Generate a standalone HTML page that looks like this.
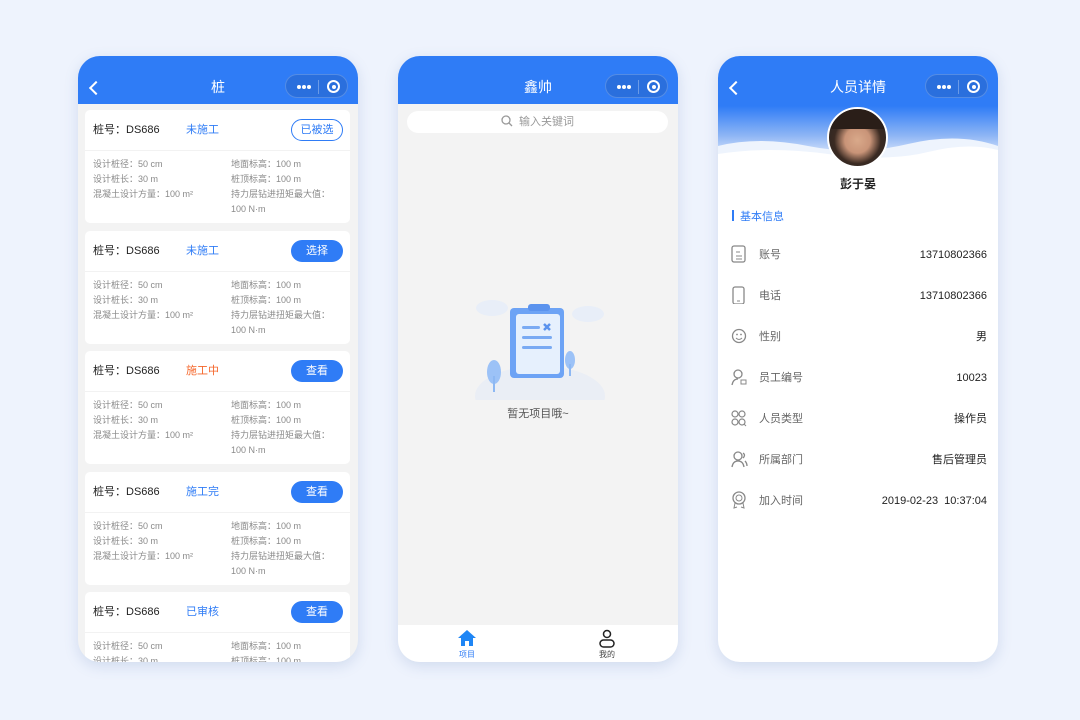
<!DOCTYPE html><html><head><meta charset="utf-8"><style>
*{margin:0;padding:0;box-sizing:border-box}
body{width:1080px;height:720px;background:#eef3fd;font-family:"Liberation Sans","Noto Sans CJK SC",sans-serif;position:relative;overflow:hidden}
.ph{position:absolute;top:56px;width:280px;height:606px;border-radius:22px;overflow:hidden;background:#f3f3f3;box-shadow:0 4px 14px rgba(80,110,170,.18)}
.hd{position:absolute;left:0;top:0;width:280px;height:48px;background:#2f7cf6;color:#fff;font-size:14px;text-align:center;line-height:62px}
.cap{position:absolute;right:10px;top:18px;width:63px;height:24px;border-radius:12px;background:rgba(0,0,0,.1);border:1px solid rgba(255,255,255,.2)}
.cap .d{position:absolute;left:11px;top:10px;width:14px;height:4px}
.cap .d i{position:absolute;top:0;width:4px;height:4px;border-radius:2px;background:#fff}
.cap .sep{position:absolute;left:32px;top:5px;width:1px;height:14px;background:rgba(255,255,255,.3)}
.cap .o{position:absolute;left:41px;top:5px;width:13px;height:13px;border:2px solid #fff;border-radius:50%}
.cap .o:after{content:"";position:absolute;left:2.5px;top:2.5px;width:4px;height:4px;border-radius:50%;background:#fff}
.back{position:absolute;left:13px;top:27px;width:10px;height:10px;border-left:2px solid #fff;border-bottom:2px solid #fff;transform:rotate(45deg)}
.card{position:absolute;left:7px;width:265px;height:113px;background:#fff;border-radius:5px}
.card .t{position:absolute;left:8px;top:13px;font-size:11px;line-height:14px;color:#222}
.card .s{position:absolute;left:101px;top:13px;font-size:11px;line-height:14px;color:#2f7cf6}
.card .b{position:absolute;left:206px;top:9px;width:52px;height:22px;border-radius:11px;background:#2f7cf6;color:#fff;font-size:11px;text-align:center;line-height:22px}
.card .b.ol{background:#fff;border:1px solid #2f7cf6;color:#2f7cf6;line-height:20px}
.card .ln{position:absolute;left:0;top:40px;width:100%;height:1px;background:#f2f2f2}
.card .g{position:absolute;font-size:9px;color:#8a8a8a;line-height:15px}
.row{position:absolute;left:0;width:280px;height:20px;font-size:11px}
.row .l{position:absolute;left:41px;top:3px;line-height:14px;color:#666}
.row .v{position:absolute;right:11px;top:3px;line-height:14px;color:#222}
.row svg{position:absolute;left:13px;top:0}
</style></head><body>

<div class="ph" style="left:78px">
<div class="hd">桩<div class="back"></div><div class="cap"><div class="d"><i style="left:0"></i><i style="left:5px"></i><i style="left:10px"></i></div><div class="sep"></div><div class="o"></div></div></div>
<div class="card" style="top:54px"><div class="t">桩号：DS686</div><div class="s">未施工</div><div class="b ol">已被选</div><div class="ln"></div>
<div class="g" style="left:8px;top:47px">设计桩径：50 cm<br>设计桩长：30 m<br>混凝土设计方量：100 m²</div><div class="g" style="left:146px;top:47px">地面标高：100 m<br>桩顶标高：100 m<br>持力层钻进扭矩最大值：<br>100 N·m</div></div>
<div class="card" style="top:175px"><div class="t">桩号：DS686</div><div class="s">未施工</div><div class="b">选择</div><div class="ln"></div>
<div class="g" style="left:8px;top:47px">设计桩径：50 cm<br>设计桩长：30 m<br>混凝土设计方量：100 m²</div><div class="g" style="left:146px;top:47px">地面标高：100 m<br>桩顶标高：100 m<br>持力层钻进扭矩最大值：<br>100 N·m</div></div>
<div class="card" style="top:295px"><div class="t">桩号：DS686</div><div class="s" style="color:#f5662a">施工中</div><div class="b">查看</div><div class="ln"></div>
<div class="g" style="left:8px;top:47px">设计桩径：50 cm<br>设计桩长：30 m<br>混凝土设计方量：100 m²</div><div class="g" style="left:146px;top:47px">地面标高：100 m<br>桩顶标高：100 m<br>持力层钻进扭矩最大值：<br>100 N·m</div></div>
<div class="card" style="top:416px"><div class="t">桩号：DS686</div><div class="s">施工完</div><div class="b">查看</div><div class="ln"></div>
<div class="g" style="left:8px;top:47px">设计桩径：50 cm<br>设计桩长：30 m<br>混凝土设计方量：100 m²</div><div class="g" style="left:146px;top:47px">地面标高：100 m<br>桩顶标高：100 m<br>持力层钻进扭矩最大值：<br>100 N·m</div></div>
<div class="card" style="top:536px"><div class="t">桩号：DS686</div><div class="s">已审核</div><div class="b">查看</div><div class="ln"></div>
<div class="g" style="left:8px;top:47px">设计桩径：50 cm<br>设计桩长：30 m</div><div class="g" style="left:146px;top:47px">地面标高：100 m<br>桩顶标高：100 m</div></div>
</div>

<div class="ph" style="left:398px">
<div class="hd">鑫帅<div class="cap"><div class="d"><i style="left:0"></i><i style="left:5px"></i><i style="left:10px"></i></div><div class="sep"></div><div class="o"></div></div></div>
<div style="position:absolute;left:9px;top:55px;width:261px;height:22px;border-radius:11px;background:#fff;font-size:11px;color:#999;line-height:22px;text-align:center"><svg width="12" height="12" viewBox="0 0 12 12" style="vertical-align:-2px;margin-right:6px"><circle cx="5" cy="5" r="4" fill="none" stroke="#999" stroke-width="1.3"/><path d="M8 8l3 3" stroke="#999" stroke-width="1.3"/></svg>输入关键词</div>
<svg style="position:absolute;left:72px;top:240px" width="136" height="104" viewBox="0 0 136 104">
<ellipse cx="22" cy="12" rx="16" ry="8" fill="#e8eef8"/><ellipse cx="118" cy="18" rx="16" ry="8" fill="#e8eef8"/>
<ellipse cx="70" cy="100" rx="65" ry="30" fill="#eaeef5"/>
<rect x="40" y="12" width="54" height="70" rx="4" fill="#6da3f5"/><rect x="46" y="18" width="44" height="60" rx="3" fill="#e6f0fd"/>
<rect x="58" y="8" width="22" height="7" rx="3" fill="#5b93ee"/>
<rect x="52" y="30" width="18" height="3" rx="1.5" fill="#7aaaf3"/><path d="M74 28l6 6M80 28l-6 6" stroke="#5b93ee" stroke-width="2.5"/>
<rect x="52" y="40" width="30" height="3" rx="1.5" fill="#7aaaf3"/><rect x="52" y="50" width="30" height="3" rx="1.5" fill="#7aaaf3"/>
<ellipse cx="24" cy="76" rx="7" ry="12" fill="#9cc2f7"/><rect x="23" y="80" width="2" height="16" fill="#8db8f3"/>
<ellipse cx="100" cy="64" rx="5" ry="9" fill="#9cc2f7"/><rect x="99" y="68" width="2" height="12" fill="#8db8f3"/>
</svg>
<div style="position:absolute;left:0;width:280px;top:349px;text-align:center;font-size:11px;color:#555">暂无项目哦~</div>
<div style="position:absolute;left:0;top:569px;width:280px;height:37px;background:#fff">
<svg style="position:absolute;left:59px;top:4px" width="20" height="18" viewBox="0 0 20 18"><path d="M10 1L1 9h3v8h4v-5h4v5h4V9h3z" fill="#1f86f5"/></svg>
<div style="position:absolute;left:59px;top:24px;font-size:8px;color:#2f7cf6;width:20px;text-align:center">项目</div>
<svg style="position:absolute;left:199px;top:4px" width="20" height="20" viewBox="0 0 20 20"><circle cx="10" cy="5" r="3.5" fill="none" stroke="#222" stroke-width="1.5"/><rect x="3" y="11" width="14" height="7" rx="3.5" fill="none" stroke="#222" stroke-width="1.5"/></svg>
<div style="position:absolute;left:199px;top:24px;font-size:8px;color:#444;width:20px;text-align:center">我的</div>
</div>
</div>

<div class="ph" style="left:718px;background:#fff">
<div style="position:absolute;left:0;top:0;width:280px;height:105px;background:linear-gradient(#2f7cf6 0,#2f7cf6 50px,#8fb6f5 80px,#dde8fb 100px)"></div>
<svg style="position:absolute;left:0;top:80px" width="280" height="30" viewBox="0 0 280 30"><path d="M0 10Q40 0 90 10T190 8T280 10V30H0z" fill="#eef4fd"/><path d="M0 18Q50 10 110 18T210 16T280 14V30H0z" fill="#fff"/></svg>
<div class="hd" style="background:none">人员详情<div class="back"></div><div class="cap"><div class="d"><i style="left:0"></i><i style="left:5px"></i><i style="left:10px"></i></div><div class="sep"></div><div class="o"></div></div></div>
<div style="position:absolute;left:109px;top:51px;width:61px;height:61px;border-radius:50%;border:2px solid #fff;background:radial-gradient(circle at 50% 55%,#d9a98a 0,#c99478 30%,#3a2a22 55%,#222 100%);overflow:hidden"><div style="position:absolute;left:0;top:0;width:61px;height:20px;background:#2a1e18"></div></div>
<div style="position:absolute;left:0;width:280px;top:119px;text-align:center;font-size:12px;font-weight:bold;color:#222">彭于晏</div>
<div style="position:absolute;left:14px;top:154px;width:2px;height:11px;background:#2f7cf6"></div>
<div style="position:absolute;left:22px;top:152px;font-size:11px;color:#2f7cf6">基本信息</div>
<div class="row" style="top:189px"><svg width="16" height="18"><rect x="1" y="1" width="13" height="16" rx="2" fill="none" stroke="#888" stroke-width="1.3"/><path d="M5 7h4M5 11h6M5 14h6" stroke="#888"/></svg><span class="l">账号</span><span class="v">13710802366</span></div>
<div class="row" style="top:230px"><svg width="16" height="18"><rect x="2" y="1" width="11" height="17" rx="2" fill="none" stroke="#888" stroke-width="1.3"/><path d="M6 15h3" stroke="#888"/></svg><span class="l">电话</span><span class="v">13710802366</span></div>
<div class="row" style="top:271px"><svg width="16" height="18"><circle cx="8" cy="9" r="6.5" fill="none" stroke="#888" stroke-width="1.3"/><circle cx="6" cy="7.5" r=".9" fill="#888"/><circle cx="10" cy="7.5" r=".9" fill="#888"/><path d="M5 11q3 3 6 0" fill="none" stroke="#888"/></svg><span class="l">性别</span><span class="v">男</span></div>
<div class="row" style="top:312px"><svg width="16" height="18"><circle cx="7" cy="6" r="4" fill="none" stroke="#888" stroke-width="1.3"/><path d="M1 17q1-6 6-6" fill="none" stroke="#888" stroke-width="1.3"/><rect x="10" y="12" width="5" height="4" fill="none" stroke="#888"/></svg><span class="l">员工编号</span><span class="v">10023</span></div>
<div class="row" style="top:353px"><svg width="16" height="18"><circle cx="4" cy="5" r="3" fill="none" stroke="#888" stroke-width="1.2"/><circle cx="11" cy="5" r="3" fill="none" stroke="#888" stroke-width="1.2"/><circle cx="4" cy="13" r="3" fill="none" stroke="#888" stroke-width="1.2"/><circle cx="11" cy="13" r="3" fill="none" stroke="#888" stroke-width="1.2"/><path d="M13 15l2 2" stroke="#888"/></svg><span class="l">人员类型</span><span class="v">操作员</span></div>
<div class="row" style="top:394px"><svg width="18" height="18"><circle cx="7" cy="6" r="4" fill="none" stroke="#888" stroke-width="1.3"/><path d="M1 17q1-6 6-6t6 6M12 3q3 2 0 5M14 11q2 2 2 5" fill="none" stroke="#888" stroke-width="1.3"/></svg><span class="l">所属部门</span><span class="v">售后管理员</span></div>
<div class="row" style="top:435px"><svg width="16" height="18"><circle cx="8" cy="7" r="6" fill="none" stroke="#888" stroke-width="1.3"/><circle cx="8" cy="7" r="3" fill="none" stroke="#888"/><path d="M4 12l-1 5 3-1M12 12l1 5-3-1" fill="none" stroke="#888"/></svg><span class="l">加入时间</span><span class="v">2019-02-23&nbsp;&nbsp;10:37:04</span></div>
</div>
</body></html>
